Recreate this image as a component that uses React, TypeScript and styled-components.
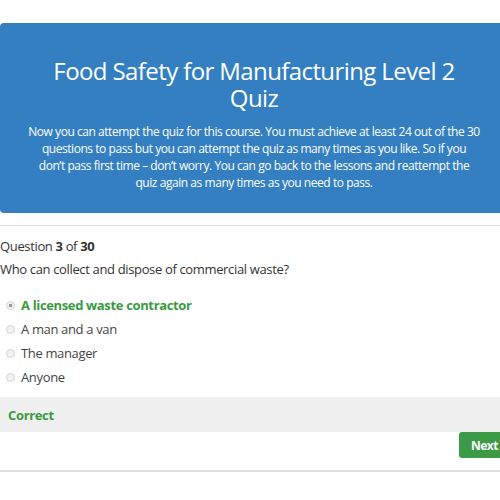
import styled, { createGlobalStyle } from "styled-components";

const GlobalStyle = createGlobalStyle`
  html, body {
    margin: 0;
    padding: 0;
    background: #ffffff;
    overflow: hidden;
  }
  body {
    font-family: "Open Sans", "Noto Sans", sans-serif;
    color: #333333;
  }
`;

const Page = styled.div`
  width: 508px;
  padding-top: 23px;
`;

const Banner = styled.header`
  background-color: #337fc2;
  color: #ffffff;
  border-radius: 4px;
  padding: 34px 24px 22px;
  text-align: center;
`;

const Title = styled.h1`
  margin: 0 0 12px;
  padding: 0 15px;
  font-size: 24px;
  font-weight: 400;
  line-height: 27px;
  letter-spacing: -0.6px;
`;

const Intro = styled.p`
  margin: 0;
  font-size: 12px;
  line-height: 17px;
  letter-spacing: -0.45px;
`;

const Spacer = styled.div`
  height: 12px;
`;

const Divider = styled.hr<{ thick?: boolean }>`
  border: 0;
  height: ${(props) => (props.thick ? "2px" : "1px")};
  background: #dedede;
  margin: 0;
`;

const QuizBody = styled.section`
  padding-top: 11px;
  letter-spacing: -0.35px;
`;

const Counter = styled.div`
  font-size: 13px;
  line-height: 18px;

  b {
    font-weight: 700;
  }
`;

const Question = styled.div`
  font-size: 13px;
  line-height: 18px;
  margin-top: 5px;
`;

const Options = styled.ul`
  list-style: none;
  margin: 18px 0 0;
  padding: 0 0 0 6px;
  display: flex;
  flex-direction: column;
  gap: 6px;
`;

const Option = styled.li<{ correct?: boolean }>`
  display: flex;
  align-items: center;
  gap: 6px;
  height: 18px;
  font-size: 13px;
  color: ${(props) => (props.correct ? "#3a9a3f" : "#444444")};
  font-weight: ${(props) => (props.correct ? 700 : 400)};
`;

const Radio = styled.span<{ checked?: boolean }>`
  width: 7px;
  height: 7px;
  border-radius: 50%;
  border: 1px solid #d4d4d4;
  background: ${(props) =>
    props.checked ? "radial-gradient(circle, #9a9a9a 0 1.5px, #eeeeee 2px)" : "#f3f3f3"};
  flex: none;
`;

const Feedback = styled.div`
  margin-top: 11px;
  background: #efefef;
  color: #3a9a3f;
  font-weight: 700;
  font-size: 13px;
  height: 35px;
  display: flex;
  align-items: center;
  padding-left: 8px;
`;

const Actions = styled.div`
  display: flex;
  justify-content: flex-end;
  padding-bottom: 12px;
`;

const NextButton = styled.button`
  background: #3d9b48;
  color: #ffffff;
  border: 0;
  border-radius: 3px;
  font-family: inherit;
  letter-spacing: -0.5px;
  font-weight: 700;
  font-size: 12px;
  height: 26px;
  padding: 0 12px;
  width: 49px;
  text-align: left;
  white-space: nowrap;
`;

const options = [
  "A licensed waste contractor",
  "A man and a van",
  "The manager",
  "Anyone",
];

export default function App() {
  return (
    <Page>
      <GlobalStyle />
      <Banner>
        <Title>Food Safety for Manufacturing Level 2 Quiz</Title>
        <Intro>
          Now you can attempt the quiz for this course. You must achieve at least 24 out of the 30
          <br />
          questions to pass but you can attempt the quiz as many times as you like. So if you
          <br />
          don’t pass first time – don’t worry. You can go back to the lessons and reattempt the
          <br />
          quiz again as many times as you need to pass.
        </Intro>
      </Banner>
      <Spacer />
      <Divider />
      <QuizBody>
        <Counter>
          Question <b>3</b> of <b>30</b>
        </Counter>
        <Question>Who can collect and dispose of commercial waste?</Question>
        <Options>
          {options.map((text, i) => (
            <Option key={text} correct={i === 0}>
              <Radio checked={i === 0} />
              {text}
            </Option>
          ))}
        </Options>
        <Feedback>Correct</Feedback>
        <Actions>
          <NextButton>Next</NextButton>
        </Actions>
      </QuizBody>
      <Divider thick />
    </Page>
  );
}
